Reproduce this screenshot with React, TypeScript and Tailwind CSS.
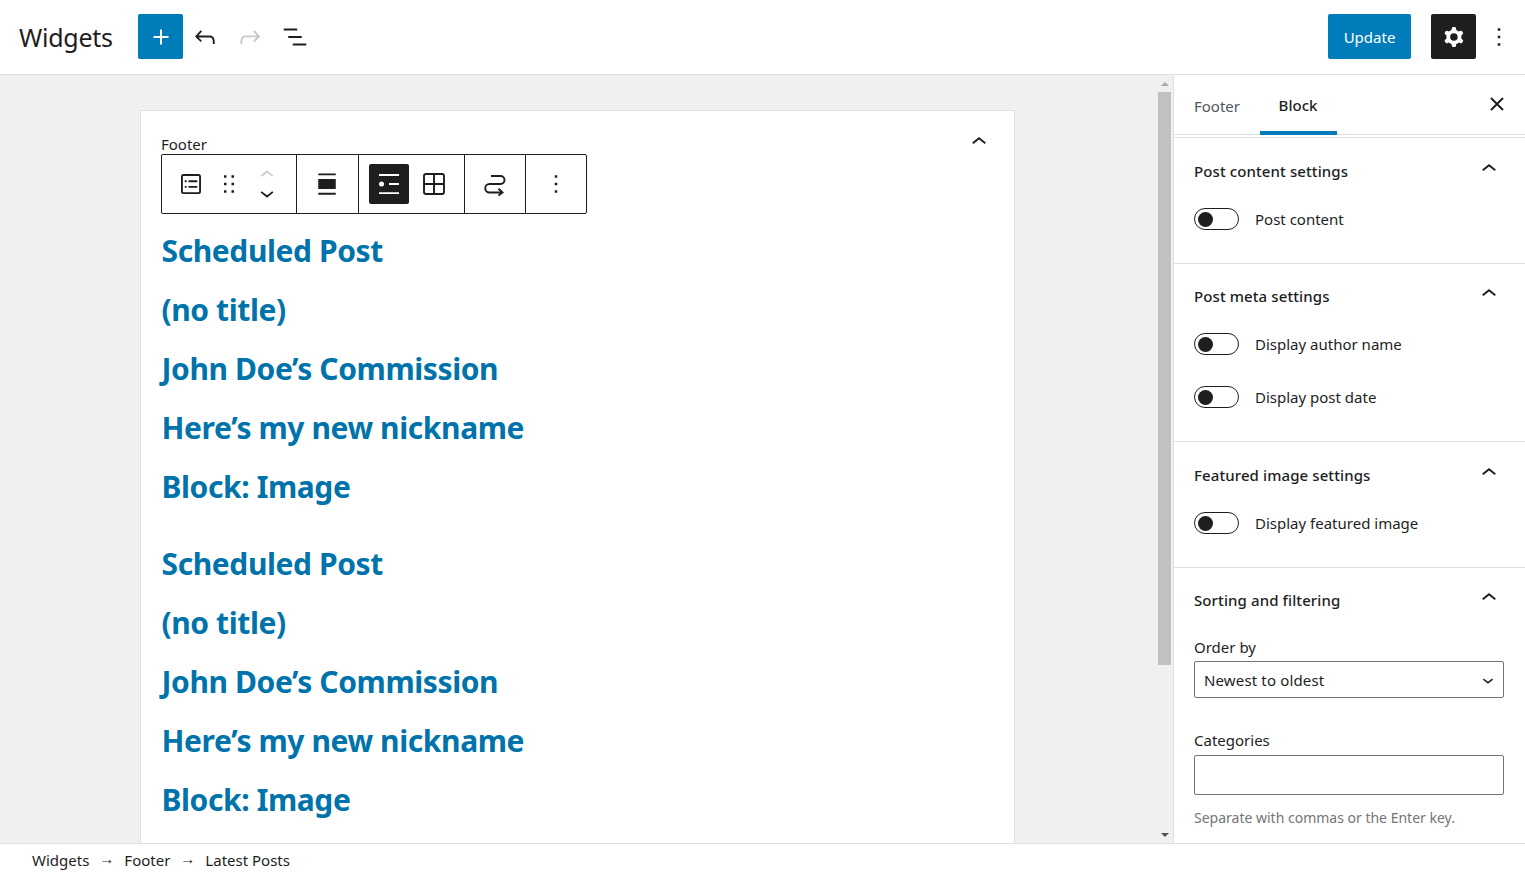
const P = {
  plus: 'M18 11.2h-5.2V6h-1.6v5.2H6v1.6h5.2V18h1.6v-5.2H18z',
  undo: 'M18.3 11.7c-.6-.6-1.4-.9-2.3-.9H6.7l2.9-3.3-1.1-1-4.5 5L8.5 16l1-1-2.7-2.7H16c.5 0 .9.2 1.3.5 1 1 1 3.4 1 4.5v.3h1.5v-.2c0-1.5 0-4.3-1.5-5.7z',
  redo: 'M15.6 6.5l-1.1 1 2.9 3.3H8c-.9 0-1.7.3-2.3.9-1.4 1.5-1.4 4.2-1.4 5.6v.2h1.5v-.3c0-1.1 0-3.5 1-4.5.3-.3.7-.5 1.3-.5h9.2L14.5 15l1.1 1.1 4.6-4.6-4.6-5z',
  listView: 'M13.8 5.2H3v1.5h10.8V5.2zm-3.6 12v1.5H21v-1.5H10.2zm7.2-6H6.6v1.5h10.8v-1.5z',
  cog: 'M10.289 4.836A1 1 0 0111.275 4h1.306a1 1 0 01.987.836l.244 1.466c.787.26 1.503.679 2.108 1.218l1.393-.522a1 1 0 011.216.437l.653 1.13a1 1 0 01-.23 1.273l-1.148.944a6.025 6.025 0 010 2.435l1.149.946a1 1 0 01.23 1.272l-.653 1.13a1 1 0 01-1.216.437l-1.394-.522c-.605.54-1.32.958-2.108 1.218l-.244 1.466a1 1 0 01-.987.836h-1.306a1 1 0 01-.986-.836l-.244-1.466a5.995 5.995 0 01-2.108-1.218l-1.394.522a1 1 0 01-1.217-.436l-.653-1.131a1 1 0 01.23-1.272l1.149-.946a6.026 6.026 0 010-2.435l-1.148-.944a1 1 0 01-.23-1.272l.653-1.131a1 1 0 011.217-.437l1.393.522a5.994 5.994 0 012.108-1.218l.244-1.466zM14.929 12a3 3 0 11-6 0 3 3 0 016 0z',
  more: 'M13 19h-2v-2h2v2zm0-6h-2v-2h2v2zm0-6h-2V5h2v2z',
  up: 'M6.5 12.4L12 8l5.5 4.4-.9 1.2L12 10l-4.5 3.6-1-1.2z',
  down: 'M17.5 11.6L12 16l-5.5-4.4.9-1.2L12 14l4.5-3.6 1 1.2z',
  drag: 'M8 7h2V5H8v2zm0 6h2v-2H8v2zm0 6h2v-2H8v2zm6-14v2h2V5h-2zm0 8h2v-2h-2v2zm0 6h2v-2h-2v2z',
  postList: 'M18 5.5H6a.5.5 0 00-.5.5v12a.5.5 0 00.5.5h12a.5.5 0 00.5-.5V6a.5.5 0 00-.5-.5zM6 4h12a2 2 0 012 2v12a2 2 0 01-2 2H6a2 2 0 01-2-2V6a2 2 0 012-2zm1 5h1.5v1.5H7V9zm1.5 4.5H7V15h1.5v-1.5zM10 9h7v1.5h-7V9zm7 4.5h-7V15h7v-1.5z',
  wide: 'M5 3.5h14V5H5zM5 19h14v1.5H5zM5 8h14v8H5z',
  rows: 'M4 4h16v1.5H4zM4 18.5h16V20H4zM12 11.25h8v1.5h-8zM8 12a2 2 0 1 1-4 0 2 2 0 0 1 4 0z',
}

function Icon({ d, className = '', size = 30 }: { d: string; className?: string; size?: number }) {
  return (
    <svg width={size} height={size} viewBox="0 0 24 24" className={`fill-current shrink-0 ${className}`}>
      <path d={d} fillRule="evenodd" />
    </svg>
  )
}

function Toggle({ label }: { label: string }) {
  return (
    <div className="flex items-center h-[22px]">
      <div className="w-[45px] h-[22px] rounded-full border border-[#1e1e1e] flex items-center pl-[3px] shrink-0">
        <div className="w-[15px] h-[15px] rounded-full bg-[#1e1e1e]" />
      </div>
      <span className="ml-[16px] text-[#1e1e1e]">{label}</span>
    </div>
  )
}

function Panel({ title, children, head = 'h-[66px]' }: { title: string; children: React.ReactNode; head?: string }) {
  return (
    <section className="border-b border-[#e0e0e0] px-[20px] pb-[33px]">
      <div className={`${head} flex items-center justify-between`}>
        <h2 className="font-medium tracking-[0.1px] text-[#1e1e1e]">{title}</h2>
        <Icon d={P.up} className="mb-[5px] mr-[1px] text-[#1e1e1e]" />
      </div>
      <div className="pt-[4px]">{children}</div>
    </section>
  )
}

const titles = ['Scheduled Post', '(no title)', 'John Doe’s Commission', 'Here’s my new nickname', 'Block: Image']

function Titles() {
  return (
    <ul className="mb-[18px] ml-[0.5px]">
      {titles.map(t => (
        <li key={t} className="h-[59px] leading-[59px] text-[30px] font-bold text-[#0073aa] tracking-[-0.4px] whitespace-nowrap">
          {t}
        </li>
      ))}
    </ul>
  )
}

export default function App() {
  return (
    <div className='h-screen flex flex-col overflow-hidden bg-white text-[15px] text-[#1e1e1e] font-["Noto_Sans",sans-serif]'>
      {/* top bar */}
      <header className="h-[75px] shrink-0 border-b border-[#e0e0e0] flex items-center pl-[19px] pr-[9px] pb-[1px]">
        <h1 className="text-[25px] tracking-[-0.25px] w-[119px] mt-[3px]">Widgets</h1>
        <button className="w-[45px] h-[45px] rounded-[2px] bg-[#007cba] text-white flex items-center justify-center">
          <Icon d={P.plus} />
        </button>
        <button className="w-[45px] h-[45px] flex items-center justify-center pr-[2px]"><Icon d={P.undo} /></button>
        <button className="w-[45px] h-[45px] flex items-center justify-center pr-[2px] text-[#c8c8c8]"><Icon d={P.redo} /></button>
        <button className="w-[45px] h-[45px] flex items-center justify-center pr-[2px]"><Icon d={P.listView} /></button>
        <div className="ml-auto flex items-center">
          <button className="w-[83px] h-[45px] rounded-[2px] bg-[#007cba] text-white pt-[2px]">Update</button>
          <button className="ml-[20px] w-[45px] h-[45px] rounded-[2px] bg-[#1e1e1e] text-white flex items-center justify-center">
            <Icon d={P.cog} />
          </button>
          <button className="ml-[6px] w-[34px] h-[45px] flex items-center justify-center"><Icon d={P.more} /></button>
        </div>
      </header>

      <div className="flex-1 min-h-0 flex">
        {/* canvas */}
        <main className="w-[1173px] shrink-0 bg-[#f0f0f0] flex overflow-hidden">
          <div className="flex-1 min-w-0 pt-[35px] pl-[140px]">
            <div className="relative w-[875px] bg-white border border-[#e0e0e0] pl-[20px] pt-[23px] pb-[40px]">
              <div className="flex items-center justify-between pr-[20px] h-[20px]">
                <span className="text-[#1e1e1e]">Footer</span>
                <Icon d={P.up} className="-mt-[5px]" />
              </div>

              {/* block toolbar */}
              <div className="absolute left-[20px] top-[43px] h-[60px] flex bg-white border border-[#1e1e1e] rounded-[2px]">
                <div className="w-[134px] flex items-center pl-[10px]">
                  <div className="w-[38px] flex justify-center"><Icon d={P.postList} /></div>
                  <div className="w-[38px] flex justify-center"><Icon d={P.drag} /></div>
                  <div className="w-[38px] flex flex-col items-center">
                    <Icon d={P.up} size={28} className="text-[#cccccc] -mb-[5px]" />
                    <Icon d={P.down} size={28} className="-mt-[5px]" />
                  </div>
                </div>
                <div className="w-[62px] border-l border-[#1e1e1e] flex items-center justify-center pr-[1px]"><Icon d={P.wide} /></div>
                <div className="w-[106px] border-l border-[#1e1e1e] flex items-center pl-[10px]">
                  <div className="w-[40px] h-[40px] rounded-[2px] bg-[#1e1e1e] text-white flex items-center justify-center"><Icon d={P.rows} /></div>
                  <div className="w-[50px] flex justify-center">
                    <svg width="24" height="24" viewBox="0 0 24 24" fill="none" stroke="currentColor" strokeWidth="1.9">
                      <rect x="2" y="2" width="20" height="20" rx="2" />
                      <path d="M12 2v20M2 12h20" />
                    </svg>
                  </div>
                </div>
                <div className="w-[61px] border-l border-[#1e1e1e] flex items-center justify-center">
                  <svg width="24" height="24" viewBox="0 0 24 24" fill="none" stroke="currentColor" strokeWidth="1.9">
                    <path d="M8 4h9.5a4 4 0 0 1 0 8H6.5a4 4 0 0 0 0 8.5H19" />
                    <path d="M15.5 16.8 19.5 20.5 15.5 23.6" />
                  </svg>
                </div>
                <div className="w-[61px] border-l border-[#1e1e1e] flex items-center justify-center"><Icon d={P.more} /></div>
              </div>

              <div className="mt-[67px]">
                <Titles />
                <Titles />
              </div>
            </div>
          </div>

          {/* scrollbar */}
          <div className="w-[16px] shrink-0 flex flex-col items-start pl-[1px]">
            <div className="h-[17px] w-[13px] flex items-center justify-center">
              <div className="w-0 h-0 border-x-[4px] border-x-transparent border-b-[4px] border-b-[#a8a8a8]" />
            </div>
            <div className="w-[13px] h-[573px] bg-[#c1c1c1]" />
            <div className="mt-auto h-[17px] w-[13px] flex items-center justify-center">
              <div className="w-0 h-0 border-x-[4px] border-x-transparent border-t-[4px] border-t-[#505050]" />
            </div>
          </div>
        </main>

        {/* sidebar */}
        <aside className="flex-1 min-w-0 border-l border-[#e0e0e0] overflow-hidden">
          <div className="h-[60px] border-b border-[#e0e0e0] flex items-stretch pl-[2px] pr-[16px]">
            <div className="w-[84px] flex items-center justify-center pt-[3px] pr-[2px] text-[#50575e]">Footer</div>
            <div className="w-[77px] flex items-center justify-center pt-[4px] pr-[1px] font-medium border-b-[4px] border-[#007cba] h-[60px]">Block</div>
            <svg width="24" height="24" viewBox="0 0 24 24" className="ml-auto self-center -mt-[2px] shrink-0" fill="none" stroke="currentColor" strokeWidth="2">
              <path d="M6 6l12 12M18 6 6 18" />
            </svg>
          </div>
          <div className="h-[2px]" />
          <div className="border-t border-[#e0e0e0]">
            <Panel title="Post content settings"><Toggle label="Post content" /></Panel>
            <Panel title="Post meta settings" head="h-[65px]">
              <div className="flex flex-col gap-[31px]">
                <Toggle label="Display author name" />
                <Toggle label="Display post date" />
              </div>
            </Panel>
            <Panel title="Featured image settings"><Toggle label="Display featured image" /></Panel>
            <Panel title="Sorting and filtering" head="h-[65px]">
              <div className="pt-[1px]">
                <label className="block h-[20px] leading-[18px]">Order by</label>
                <div className="mt-[3px] h-[37px] w-[310px] border border-[#757575] rounded-[2px] flex items-center justify-between pl-[9px] pr-[4px]">
                  <span className="tracking-[0.15px] pt-[1px]">Newest to oldest</span>
                  <Icon d={P.down} size={22} />
                </div>
                <label className="block mt-[32px] h-[20px] leading-[20px]">Categories</label>
                <div className="mt-[5px] h-[40px] w-[310px] border border-[#757575] rounded-[2px]" />
                <p className="mt-[12px] text-[14px] text-[#757575]">Separate with commas or the Enter key.</p>
              </div>
            </Panel>
          </div>
        </aside>
      </div>

      {/* breadcrumb */}
      <footer className="h-[30px] shrink-0 border-t border-[#e0e0e0] flex items-center pl-[32px] pt-[4px] gap-[10px]">
        <span>Widgets</span>
        <span className="-translate-y-[2px]">→</span>
        <span>Footer</span>
        <span className="-translate-y-[2px]">→</span>
        <span>Latest Posts</span>
      </footer>
    </div>
  )
}
